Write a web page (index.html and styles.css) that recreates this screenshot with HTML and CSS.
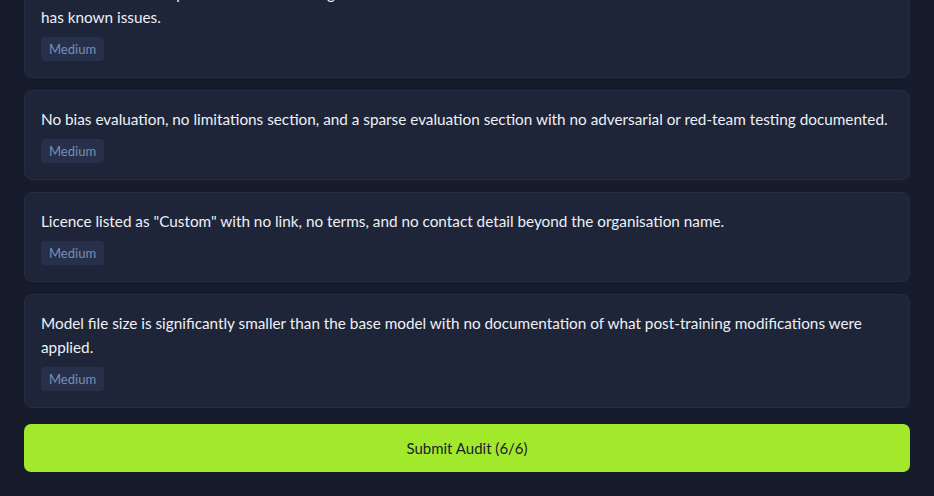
FILE: index.html
```html
<!DOCTYPE html>
<html lang="en">
<head>
<meta charset="utf-8">
<title>Audit findings</title>
<link rel="stylesheet" href="styles.css">
</head>
<body>
<main class="page">
  <section class="findings">
    <article class="finding">
      <p class="finding-text">The base model is a public mirror of the original release that was later withdrawn because the latest revision<br>has known issues.</p>
      <span class="badge">Medium</span>
    </article>
    <article class="finding">
      <p class="finding-text">No bias evaluation, no limitations section, and a sparse evaluation section with no adversarial or red-team testing documented.</p>
      <span class="badge">Medium</span>
    </article>
    <article class="finding">
      <p class="finding-text">Licence listed as "Custom" with no link, no terms, and no contact detail beyond the organisation name.</p>
      <span class="badge">Medium</span>
    </article>
    <article class="finding">
      <p class="finding-text">Model file size is significantly smaller than the base model with no documentation of what post-training modifications were applied.</p>
      <span class="badge">Medium</span>
    </article>
  </section>
  <button class="submit" type="button">Submit Audit (6/6)</button>
</main>
</body>
</html>
```
FILE: styles.css
```css
* { box-sizing: border-box; }
html, body {
  margin: 0;
  padding: 0;
  background: #161c2b;
  height: 100%;
  overflow: hidden;
}
body {
  font-family: Lato, "Noto Sans", sans-serif;
  color: #e8ebf2;
}
.page {
  padding: 0 24px 25px;
  margin-top: -36px;
  display: flex;
  flex-direction: column;
  gap: 16px;
}
.findings {
  display: flex;
  flex-direction: column;
  gap: 12px;
}
.finding {
  background: #1e2538;
  border: 1px solid #252d42;
  border-radius: 8px;
  padding: 16px;
  display: flex;
  flex-direction: column;
  align-items: flex-start;
  gap: 8px;
}
.finding-text {
  margin: 0;
  font-size: 15.3px;
  line-height: 24px;
  color: #eef0f5;
}
.badge {
  display: inline-block;
  background: #26304a;
  color: #7b8db6;
  font-size: 13px;
  line-height: 24px;
  height: 24px;
  padding: 0 8px;
  border-radius: 4px;
}
.submit {
  display: block;
  width: 100%;
  height: 48px;
  border: none;
  border-radius: 7px;
  background: #a3e92b;
  color: #1a2131;
  font-family: Lato, "Noto Sans", sans-serif;
  font-size: 15px;
  cursor: pointer;
}
```
